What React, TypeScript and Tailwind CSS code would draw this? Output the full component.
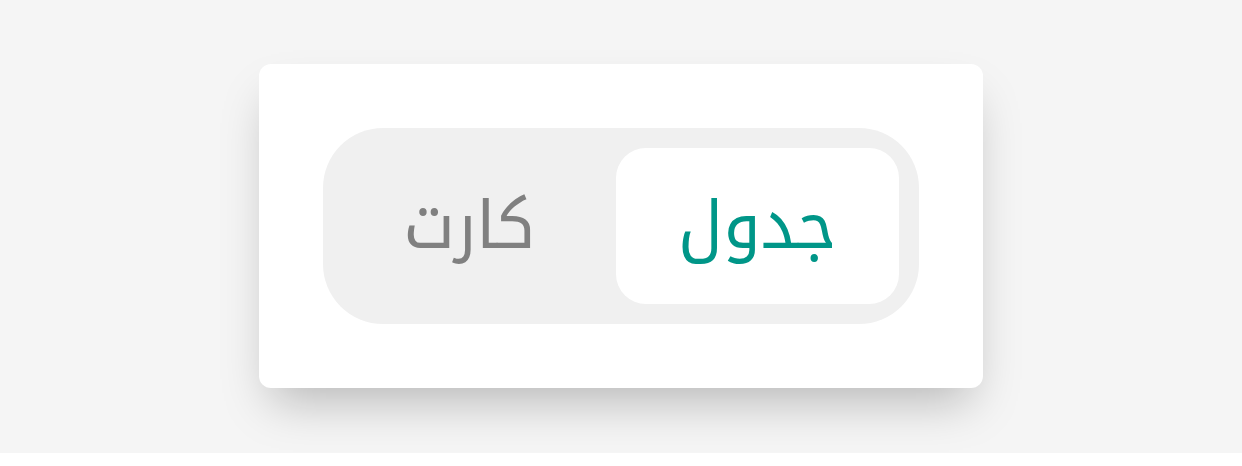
export default function App() {
  return (
    <div className="w-full">
      <div className="flex h-[453px] justify-center bg-[#f5f5f5] pt-16">
        <div className="h-[324px] w-[724px] rounded-xl bg-white p-16 shadow-[0_25px_45px_-12px_rgba(0,0,0,0.25)]">
          <div
            dir="rtl"
            className="flex h-full items-stretch gap-5 rounded-[60px] bg-[#f0f0f0] p-5"
            style={{ fontFamily: '"Noto Kufi Arabic", sans-serif' }}
          >
            <button className="flex w-[284px] items-center justify-center rounded-[30px] bg-white text-[66px] leading-none text-[#009688]">
              جدول
            </button>
            <button className="flex w-[253px] items-center justify-center rounded-[30px] text-[66px] leading-none text-[#808080]">
              کارت
            </button>
          </div>
        </div>
      </div>
    </div>
  );
}
